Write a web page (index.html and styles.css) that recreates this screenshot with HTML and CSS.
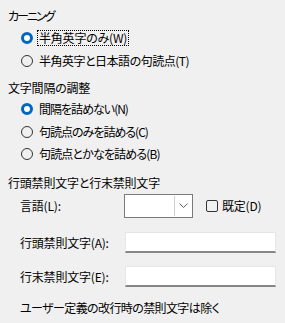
FILE: index.html
```html
<!DOCTYPE html>
<html lang="ja">
<head>
<meta charset="utf-8">
<link rel="stylesheet" href="styles.css">
</head>
<body>
<div class="panel">
  <div class="heading h1 ls-k3">カーニング</div>
  <div class="radio-row"><span class="radio on"></span><span class="label focus">半角英字のみ(W)</span></div>
  <div class="radio-row"><span class="radio"></span><span class="label ls-k1">半角英字と日本語の句読点(T)</span></div>

  <div class="heading h2">文字間隔の調整</div>
  <div class="radio-row r2"><span class="radio on"></span><span class="label ls-k2">間隔を詰めない(N)</span></div>
  <div class="radio-row r2"><span class="radio"></span><span class="label ls-k2">句読点のみを詰める(C)</span></div>
  <div class="radio-row r2"><span class="radio"></span><span class="label ls-k2b">句読点とかなを詰める(B)</span></div>

  <div class="heading h3">行頭禁則文字と行末禁則文字</div>
  <div class="field-row lang">
    <span class="field-label">言語(L):</span>
    <div class="combo"><span class="combo-text"></span><span class="combo-btn"><svg width="9" height="5" viewBox="0 0 9 5"><path d="M0.5 0.5 L4.5 4.5 L8.5 0.5" fill="none" stroke="#606060" stroke-width="1"/></svg></span></div>
    <span class="check"></span><span class="check-label">既定(D)</span>
  </div>
  <div class="field-row in1">
    <span class="field-label">行頭禁則文字(A):</span>
    <div class="textbox"></div>
  </div>
  <div class="field-row in2">
    <span class="field-label">行末禁則文字(E):</span>
    <div class="textbox"></div>
  </div>
  <div class="note ls-k4">ユーザー定義の改行時の禁則文字は除く</div>
</div>
</body>
</html>
```
FILE: styles.css
```css
html, body {
  margin: 0;
  padding: 0;
  background: #f0f0f0;
}
body {
  width: 285px;
  height: 323px;
  overflow: hidden;
  font-family: "Noto Sans CJK JP", "Noto Sans", sans-serif;
  font-size: 12px;
  color: #000;
  font-feature-settings: "palt";
  letter-spacing: -0.2px;
}
.ls-k1 { letter-spacing: -0.5px; }
.ls-k2 { letter-spacing: -1px; }
.ls-k2b { letter-spacing: -0.85px; }
.ls-k3 { letter-spacing: -2px; }
.ls-k4 { letter-spacing: -0.6px; }
.panel {
  padding: 8px 0 0 8px;
  display: flex;
  flex-direction: column;
}
.heading {
  height: 16px;
  line-height: 16px;
  display: flex;
  align-items: center;
}
.h2 { margin-top: 8px; }
.h3 { margin-top: 9px; }
.radio-row {
  height: 23px;
  display: flex;
  align-items: center;
  padding-left: 13px;
  margin-top: 0;
}
.h1 + .radio-row { margin-top: 2px; }
.h2 + .radio-row { margin-top: 2px; }
.r2 { height: 22.5px; }
.radio {
  width: 12px;
  height: 12px;
  box-sizing: border-box;
  border: 1px solid #333;
  border-radius: 50%;
  flex: none;
  margin-right: 4px;
  background: transparent;
}
.radio.on {
  border: 3.5px solid #0067c0;
  background: #fff;
}
.label {
  line-height: 14px;
  padding: 0 1px;
  border: 1px dotted transparent;
}
.label.focus {
  border-color: #000;
}
.field-row {
  display: flex;
  align-items: center;
  padding-left: 12px;
}
.field-label {
  width: 104px;
  flex: none;
}
.lang {
  height: 24px;
  margin-top: 3px;
}
.combo {
  width: 69px;
  height: 24px;
  box-sizing: border-box;
  border: 1px solid #7a7a7a;
  background: #fff;
  display: flex;
  flex: none;
}
.combo-text { flex: 1; }
.combo-btn {
  width: 16px;
  border-left: 1px solid #cfcfcf;
  margin: 1px 1px 1px 0;
  display: flex;
  align-items: center;
  justify-content: center;
}
.check {
  width: 12px;
  height: 12px;
  box-sizing: border-box;
  border: 1px solid #333;
  border-radius: 2px;
  margin-left: 13px;
  margin-right: 4px;
  flex: none;
}
.textbox {
  width: 151px;
  height: 21px;
  box-sizing: border-box;
  background: #fff;
  border: 1px solid #e6e6e6;
  border-bottom: 2px solid #868686;
  margin-left: 1px;
}
.in1 { height: 21px; margin-top: 14px; }
.in2 { height: 21px; margin-top: 13px; }
.note {
  padding-left: 12px;
  margin-top: 13px;
  height: 16px;
  line-height: 16px;
}
```
